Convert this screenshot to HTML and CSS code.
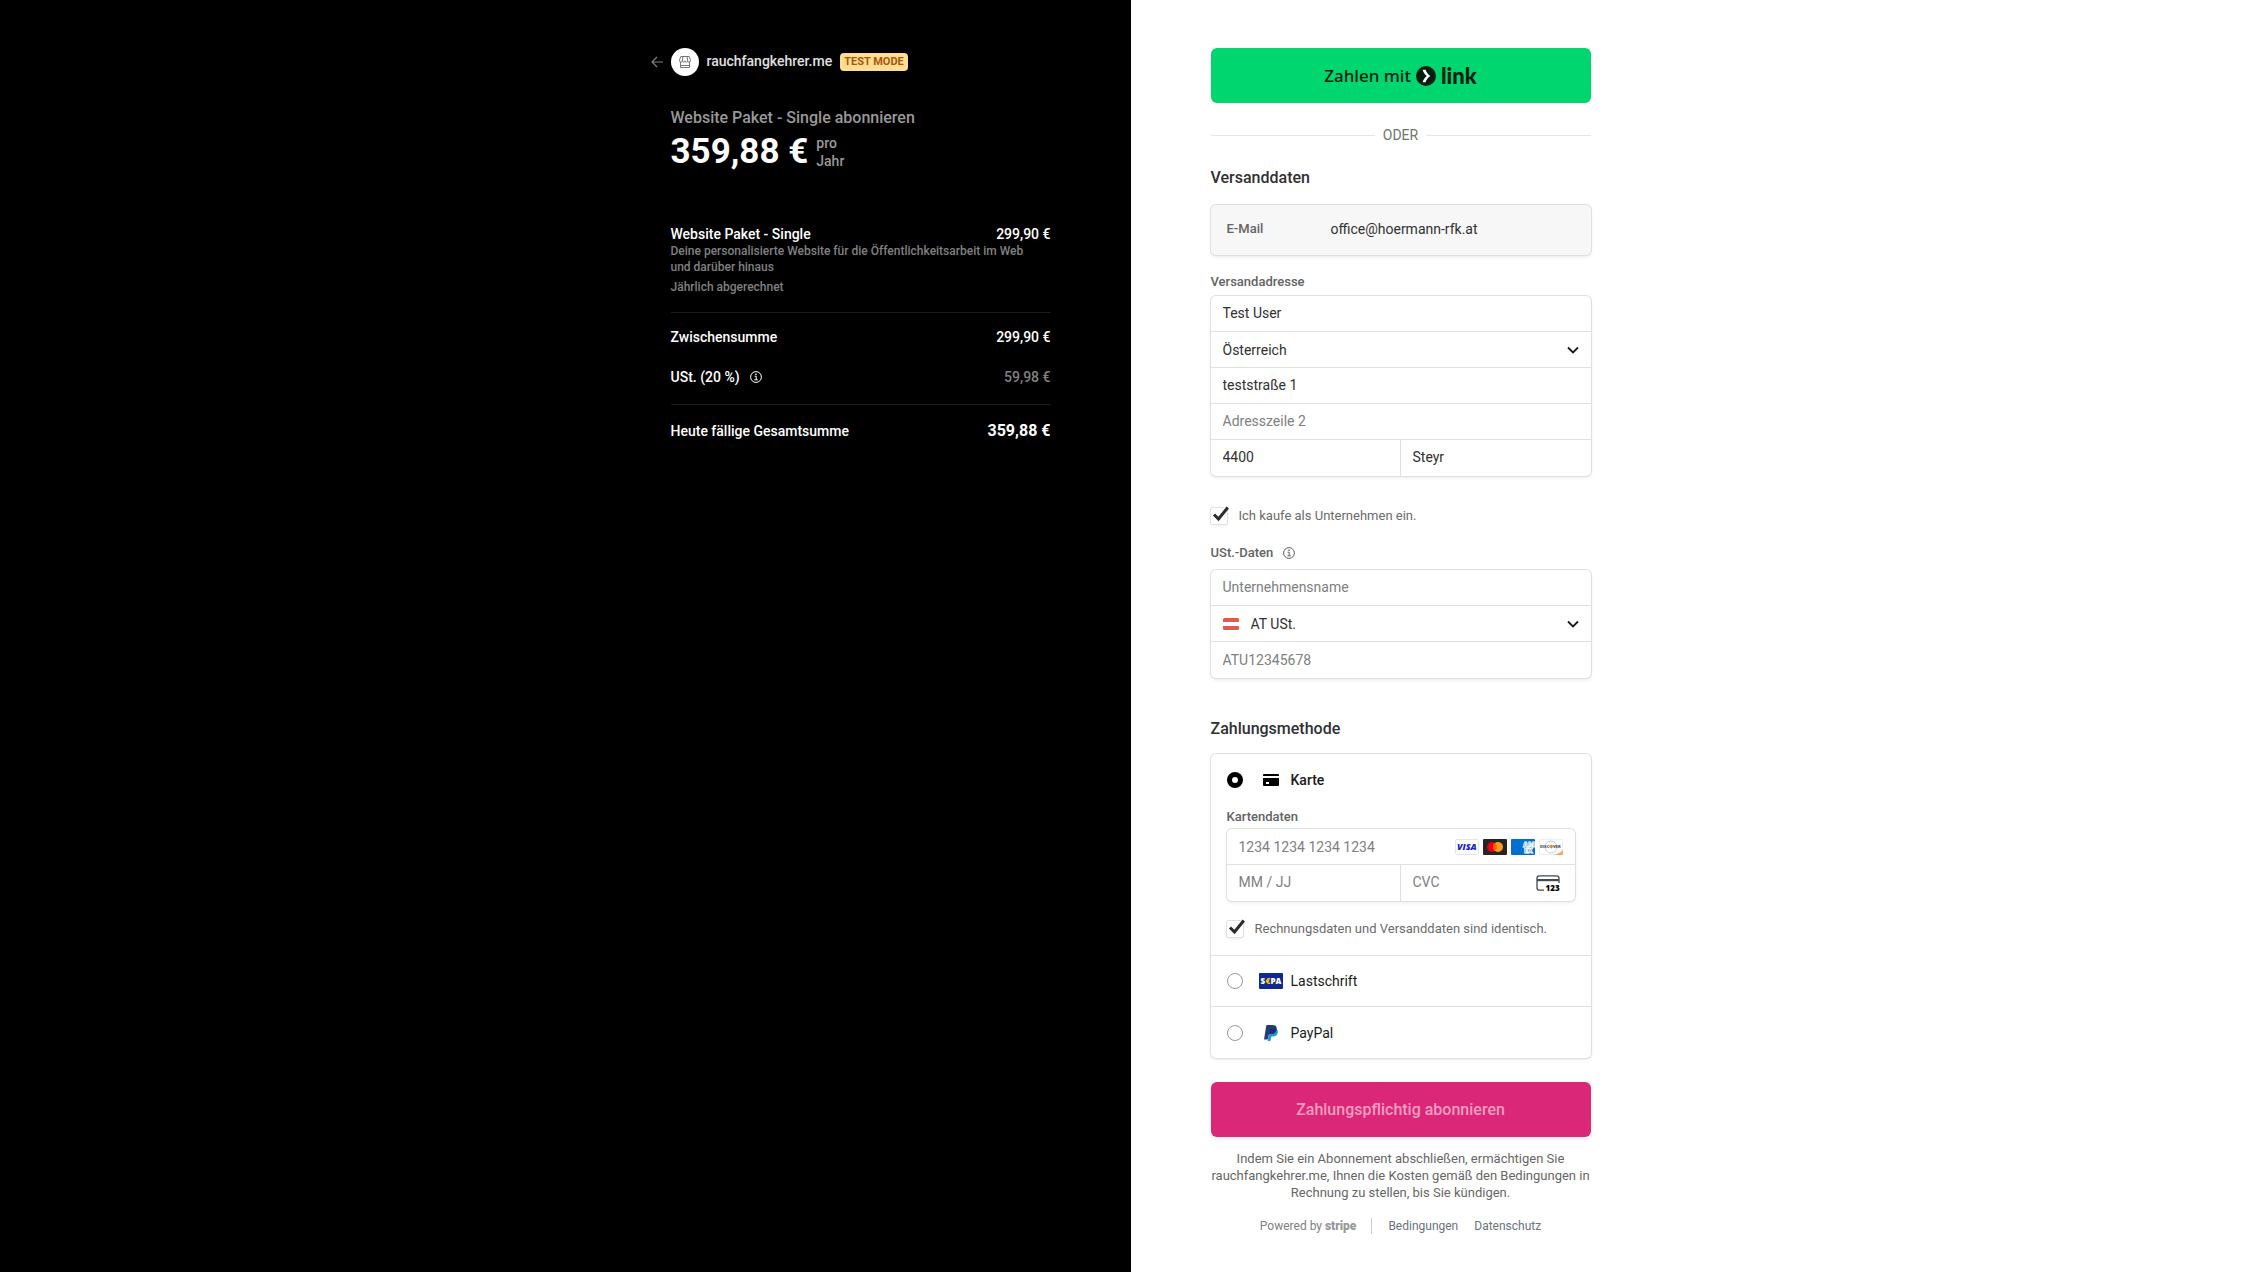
FILE: index.html
```html
<!DOCTYPE html>
<html lang="de">
<head>
<meta charset="utf-8">
<meta name="viewport" content="width=device-width, initial-scale=1">
<title>rauchfangkehrer.me</title>
<link rel="stylesheet" href="styles.css">
</head>
<body>
<div class="checkout">
  <section class="overview">
    <div class="overview-column">
      <header class="merchant">
        <a class="back" href="#" aria-label="Zurück"><svg width="12" height="12" viewBox="0 0 12 12" fill="none" stroke="currentColor" stroke-width="1.2"><path d="M12 6H1M6 1L1 6l5 5"/></svg></a>
        <span class="avatar"><svg width="12" height="12" viewBox="0 0 12 12" fill="none" stroke="#777" stroke-width="1"><path d="M1.800.5h8.400l1.300 3.500v.8c0 1.900-2.800 1.900-2.800 0 0 1.900-2.700 1.900-2.700 0 0 1.900-2.700 1.900-2.700 0 0 1.900-2.800 1.900-2.800 0V4zM4 .5L3.300 5M8 .5L8.700 5M1.500 6v5.500h9V6M1.500 9.500h9"/></svg></span>
        <span class="merchant-name">rauchfangkehrer.me</span>
        <span class="badge">TEST MODE</span>
      </header>
      <h1 class="product-title">Website Paket - Single abonnieren</h1>
      <div class="price"><span class="price-amount">359,88 €</span><span class="price-interval">pro<br>Jahr</span></div>
      <div class="item">
        <div class="line line-item"><span>Website Paket - Single</span><span>299,90 €</span></div>
        <p class="item-note">Deine personalisierte Website für die Öffentlichkeitsarbeit im Web und darüber hinaus</p>
        <p class="item-note item-interval">Jährlich abgerechnet</p>
      </div>
      <div class="line subtotal"><span>Zwischensumme</span><span>299,90 €</span></div>
      <div class="line tax">
        <span class="with-info">USt. (20 %)<svg width="12" height="12" viewBox="0 0 12 12" fill="none" stroke="currentColor"><circle cx="6" cy="6" r="5.400"/><path d="M4.600 5.200H6.200V8.800M4.400 8.800H7.800"/><circle cx="6" cy="3.200" r=".4" fill="currentColor"/></svg></span>
        <span class="muted">59,98 €</span>
      </div>
      <div class="line total"><span>Heute fällige Gesamtsumme</span><span class="total-amount">359,88 €</span></div>
    </div>
  </section>

  <main class="payment">
    <form class="payment-column">
      <button type="button" class="link-button">Zahlen mit
        <svg width="20" height="20" viewBox="0 0 20 20"><circle cx="10" cy="10" r="10" fill="#011e0f"/><path d="M7.100 3.800h3.200c.6 2.500 2.400 4.900 4.600 6.200-2.200 1.400-4 3.700-4.600 6.200H7.100c.8-2.500 2.300-4.700 4.300-6.200-2-1.500-3.500-3.600-4.300-6.200z" fill="#fff" transform="translate(-.6 0)"/></svg>
        <span class="link-word">link</span>
      </button>
      <div class="divider">ODER</div>

      <h2 class="section-title">Versanddaten</h2>
      <div class="panel contact"><span class="label">E-Mail</span><span>office@hoermann-rfk.at</span></div>

      <label class="label group-label" for="name">Versandadresse</label>
      <div class="panel fields">
        <input class="field" id="name" type="text" value="Test User">
        <div class="select-row">
          <select class="field" aria-label="Land"><option>Österreich</option></select>
          <svg class="chevron" width="12" height="12" viewBox="0 0 12 12" fill="none" stroke="#1a1a1a" stroke-width="1.800"><path d="M1 3.500l5 5 5-5"/></svg>
        </div>
        <input class="field" type="text" aria-label="Adresszeile 1" value="teststraße 1">
        <input class="field" type="text" aria-label="Adresszeile 2" placeholder="Adresszeile 2">
        <div class="pair">
          <input class="field" type="text" aria-label="Postleitzahl" value="4400">
          <input class="field" type="text" aria-label="Ort" value="Steyr">
        </div>
      </div>

      <label class="check business"><span class="check-box"><input type="checkbox" checked><svg class="tick" width="18" height="16" viewBox="0 0 18 16" fill="none" stroke="#2b2b2d" stroke-width="3"><path d="M2 8.500l4.500 4.500L15.800 1.500"/></svg></span>Ich kaufe als Unternehmen ein.</label>

      <label class="label group-label with-info tax-label" for="company">USt.-Daten<svg width="12" height="12" viewBox="0 0 12 12" fill="none" stroke="currentColor"><circle cx="6" cy="6" r="5.400"/><path d="M4.600 5.200H6.200V8.800M4.400 8.800H7.800"/><circle cx="6" cy="3.200" r=".4" fill="currentColor"/></svg></label>
      <div class="panel fields">
        <input class="field" id="company" type="text" placeholder="Unternehmensname">
        <div class="select-row">
          <select class="field field-flag" aria-label="Art der Steuernummer"><option>AT USt.</option></select>
          <svg class="flag" width="16" height="12" viewBox="0 0 16 12"><rect width="16" height="12" rx="1.500" fill="#e25950"/><path d="M0 4h16v4H0z" fill="#fff"/></svg>
          <svg class="chevron" width="12" height="12" viewBox="0 0 12 12" fill="none" stroke="#1a1a1a" stroke-width="1.800"><path d="M1 3.500l5 5 5-5"/></svg>
        </div>
        <input class="field" type="text" aria-label="Steuernummer" placeholder="ATU12345678">
      </div>

      <h2 class="section-title method-title">Zahlungsmethode</h2>
      <div class="panel methods">
        <label class="method method-active">
          <input class="radio" type="radio" name="method" checked>
          <span class="method-icon"><svg width="16" height="12" viewBox="0 0 16 12"><path d="M0 1.200C0 .4.500 0 1.200 0h13.600c.7 0 1.200.4 1.200 1.200V2H0zM0 4h16v6.800c0 .8-.5 1.200-1.200 1.200H1.200C.5 12 0 11.600 0 10.800z"/><path d="M3 8h3v2H3z" fill="#fff"/></svg></span>Karte
        </label>
        <div class="card-details">
          <label class="label card-label" for="card-number">Kartendaten</label>
          <div class="panel fields">
            <div class="icon-row">
              <input class="field" id="card-number" type="text" placeholder="1234 1234 1234 1234">
              <div class="brands">
                <svg width="24" height="16" viewBox="0 0 24 16"><rect x=".5" y=".5" width="23" height="15" rx="1" fill="#fff" stroke="#e6e6e6"/><text x="11.800" y="11.300" class="logo-text" font-size="9" font-style="italic" text-anchor="middle" fill="#171ecb">VISA</text></svg>
                <svg width="24" height="16" viewBox="0 0 24 16"><rect width="24" height="16" rx="1" fill="#252525"/><circle cx="9" cy="8" r="5" fill="#eb001b"/><circle cx="15" cy="8" r="5" fill="#f79e1b"/><path d="M12 4a5 5 0 0 1 0 8 5 5 0 0 1 0-8z" fill="#ff5f00"/></svg>
                <svg width="24" height="16" viewBox="0 0 24 16"><rect width="24" height="16" rx="1" fill="#016fd0"/><g class="logo-text" fill="none" stroke="#fff" stroke-width=".8"><text x="12" y="8" font-size="7">AM</text><text x="13" y="14" font-size="7">EX</text></g></svg>
                <svg width="24" height="16" viewBox="0 0 24 16"><rect x=".5" y=".5" width="23" height="15" rx="1" fill="#fff" stroke="#eee"/><path d="M24 11v4a1 1 0 0 1-1 1h-9c4.500-.8 8-2.500 10-5z" fill="#f9a05f"/><circle cx="12" cy="8" r="6" fill="#fff" stroke="#b4d4ea"/><circle cx="12.200" cy="7.600" r="1.800" fill="#ef8532"/><g class="logo-text" fill="#4c5660" font-size="4"><text x="1" y="9.200">DISC</text><text x="14" y="9.200">VER</text></g></svg>
              </div>
            </div>
            <div class="pair">
              <input class="field" type="text" aria-label="Ablaufdatum" placeholder="MM / JJ">
              <div class="icon-row">
                <input class="field" type="text" aria-label="CVC" placeholder="CVC">
                <svg class="cvc" width="26" height="20" viewBox="0 0 26 20"><path d="M9 17.200H4.500A2.500 2.500 0 0 1 2 14.700V5.300A2.500 2.500 0 0 1 4.500 2.800h17A2.500 2.500 0 0 1 24 5.300V10" fill="none" stroke="#424b52" stroke-width="1.300"/><path d="M2 6h22v2.200H2z" fill="#424b52"/><text class="logo-text" x="10.500" y="17.800" font-size="8">123</text></svg>
              </div>
            </div>
          </div>
          <label class="check"><span class="check-box"><input type="checkbox" checked><svg class="tick" width="18" height="16" viewBox="0 0 18 16" fill="none" stroke="#2b2b2d" stroke-width="3"><path d="M2 8.500l4.500 4.500L15.800 1.500"/></svg></span>Rechnungsdaten und Versanddaten sind identisch.</label>
        </div>
        <label class="method">
          <input class="radio" type="radio" name="method">
          <span class="method-icon"><svg width="24" height="16" viewBox="0 0 24 16"><rect width="24" height="16" rx="1" fill="#10298e"/><g class="logo-text" font-size="8" fill="#fff"><text x="1.500" y="11">S</text><text x="6.500" y="11" fill="#ffbe00">€</text><text x="11.500" y="11">PA</text></g></svg></span>Lastschrift
        </label>
        <label class="method">
          <input class="radio" type="radio" name="method">
          <span class="method-icon"><svg width="14" height="16" viewBox="0 0 14 16"><path d="M12.300 4c1.500.9 1.900 2.300 1.400 3.900-.7 2.400-2.400 3.500-4.900 3.500h-.9c-.4 0-.6.200-.7.600l-.6 3.500c0 .3-.3.500-.6.500H3.700l1.200-5.500L6 6z" fill="#179bd7"/><path d="M2.300.6C2.400.2 2.700 0 3.100 0h5.400c3 0 4.600 1.400 4.100 4.200-.5 3.200-2.400 4.700-5.400 4.700H5.700c-.5 0-.7.200-.8.600L4 14.100c-.1.300-.2.400-.5.400H.5c-.3 0-.5-.2-.4-.5z" fill="#253b80"/><path d="M6.300 4.200c.1-.4.300-.6.700-.6h4c.6 0 1.100.1 1.600.4-.4 3.200-2.400 4.900-5.400 4.900H5.500z" fill="#222d65"/></svg></span>PayPal
        </label>
      </div>

      <button type="submit" class="submit">Zahlungspflichtig abonnieren</button>
      <p class="terms">Indem Sie ein Abonnement abschließen, ermächtigen Sie rauchfangkehrer.me, Ihnen die Kosten gemäß den Bedingungen in Rechnung zu stellen, bis Sie kündigen.</p>
      <footer class="footer">
        <span class="powered">Powered by <b class="stripe">stripe</b></span>
        <span class="footer-links"><a href="#">Bedingungen</a><a href="#">Datenschutz</a></span>
      </footer>
    </form>
  </main>
</div>
</body>
</html>
```
FILE: styles.css
```css
* { box-sizing: border-box; }

body {
  margin: 0;
  background: #fff;
  color: #303032;
  font: 14px/20px Roboto, "Liberation Sans", sans-serif;
}

h1, h2, p { margin: 0; }
svg { display: block; flex: none; }
button, input, select { font: inherit; color: inherit; margin: 0; }

.checkout {
  display: grid;
  grid-template-columns: 1fr 1fr;
  min-height: 100vh;
}

.overview {
  display: flex;
  justify-content: flex-end;
  padding: 48px 80px 0 32px;
  background: #000;
  color: #fff;
}
.overview-column, .payment-column { width: 100%; max-width: 380px; }
.payment { padding: 48px 32px 0 80px; }

/* Order summary */
.merchant {
  display: flex;
  align-items: center;
  gap: 8px;
  margin-left: -20px;
}
.back { color: #808080; }
.avatar {
  display: grid;
  place-items: center;
  width: 28px;
  height: 28px;
  border-radius: 50%;
  background: #fff;
}
.merchant-name { padding-bottom: 2px; font-weight: 500; color: #e0e0e0; }
.badge {
  padding: 0 4px;
  border-radius: 4px;
  background: #ffde92;
  color: #a8550e;
  font-size: 11px;
  font-weight: 700;
  line-height: 18px;
}
.product-title {
  margin-top: 32px;
  color: #999;
  font-size: 16px;
  font-weight: 500;
  line-height: 20px;
}
.price { display: flex; align-items: center; gap: 8px; }
.price-amount { font-size: 35px; font-weight: 700; line-height: 48px; }
.price-interval { color: #999; font-weight: 500; line-height: 18px; }

.line {
  display: flex;
  justify-content: space-between;
  font-weight: 500;
}
.item {
  margin-top: 49px;
  padding-bottom: 17px;
  border-bottom: 1px solid #1c1c1c;
}
.line-item { line-height: 18px; }
.item-note {
  max-width: 356px;
  color: #808080;
  font-size: 12px;
  font-weight: 500;
  line-height: 16px;
}
.item-interval { margin-top: 4px; }
.subtotal { margin-top: 14px; }
.tax {
  margin-top: 20px;
  padding-bottom: 17px;
  border-bottom: 1px solid #1c1c1c;
}
.muted { color: #808080; }
.total { margin-top: 16px; }
.total-amount { font-size: 16px; font-weight: 700; }
.with-info { display: flex; align-items: center; gap: 10px; }

/* Payment form */
.link-button, .submit {
  display: flex;
  align-items: center;
  justify-content: center;
  width: 100%;
  height: 55px;
  padding: 0;
  border: 0;
  border-radius: 6px;
}
.link-button {
  gap: 5px;
  background: #00d66f;
  color: #011e0f;
  font: 500 17px/24px "Noto Sans", sans-serif;
}
.link-word { font-family: Lato, sans-serif; font-size: 22px; font-weight: 900; }

.divider {
  display: flex;
  align-items: center;
  gap: 8px;
  margin-top: 22px;
  color: #737373;
}
.divider::before, .divider::after {
  content: "";
  flex: 1;
  height: 1px;
  background: #e6e6e6;
}

.section-title {
  margin-top: 23px;
  color: #303032;
  font-size: 16px;
  font-weight: 500;
  line-height: 20px;
}
.label { color: #636363; font-size: 13px; font-weight: 500; line-height: 16px; }
.group-label { display: block; margin: 19px 0 6px; }

.panel {
  border-radius: 5px;
  background: #fff;
  box-shadow: 0 0 0 1px #e0e0e0, 0 2px 4px 0 rgba(0, 0, 0, .07), 0 1px 2px 0 rgba(0, 0, 0, .05);
}
.contact {
  display: grid;
  grid-template-columns: 104px 1fr;
  align-items: center;
  height: 50px;
  margin-top: 17px;
  padding: 0 16px 2px;
  background: #f7f7f7;
}

.field {
  display: block;
  width: 100%;
  min-width: 0;
  height: 36px;
  padding: 0 12px 1px;
  border: 0;
  border-radius: 5px;
  outline: 0;
  background: transparent;
  appearance: none;
}
.field::placeholder { color: #808080; opacity: 1; }
.field-flag { padding-left: 40px; }

/* Stacked rows share 1px rules inside one outlined panel */
.fields > * { height: 36px; }
.fields > :first-child { height: 35px; }
.fields > :last-child { height: 37px; }
.fields > * + * { border-top: 1px solid #e0e0e0; border-radius: 0; }

.select-row, .icon-row { display: grid; align-items: center; min-width: 0; }
.select-row > *, .icon-row > * { grid-area: 1 / 1; }
.chevron { justify-self: end; margin-right: 12px; pointer-events: none; }
.flag { margin-left: 12px; pointer-events: none; }
.pair { display: grid; grid-template-columns: 1fr 1fr; }
.pair .field { padding-bottom: 2px; }
.pair > :first-child { border-right: 1px solid #e0e0e0; border-radius: 0; }
.brands { display: flex; gap: 4px; justify-self: end; margin-right: 12px; }
.cvc { justify-self: end; margin-right: 14px; }
.logo-text { font-family: "Open Sans", sans-serif; font-weight: 800; }

.check {
  display: flex;
  align-items: center;
  gap: 12px;
  color: #6b6b6b;
  font-size: 13px;
  line-height: 16px;
}
.check-box { display: grid; width: 16px; height: 16px; }
.check-box > * { grid-area: 1 / 1; }
.check-box input {
  width: 16px;
  height: 16px;
  border-radius: 2px;
  background: #fff;
  box-shadow: 0 0 0 1px #e0e0e0, 0 2px 4px 0 rgba(0, 0, 0, .07);
  appearance: none;
}
.tick { margin: -2px 0 0 1px; pointer-events: none; }
.business { margin-top: 32px; }
.group-label.tax-label { display: flex; margin: 21px 0 9px; }

/* Payment methods */
.method-title { margin-top: 41px; }
.methods { margin-top: 15px; }
.method {
  display: flex;
  align-items: center;
  height: 51px;
  padding: 0 16px;
  border-top: 1px solid #e0e0e0;
  color: #1a1a1a;
}
.method:last-child { height: 52px; }
.method-active { border-top: 0; font-weight: 500; }
.card-details { padding: 4px 16px 18px; }
.card-details .check { margin-top: 20px; }
.card-label { display: block; margin-bottom: 4px; }
.radio {
  width: 16px;
  height: 16px;
  border: 1px solid #999;
  border-radius: 50%;
  appearance: none;
}
.radio:checked { border: 5px solid #000; }
.method-icon {
  display: grid;
  place-items: center;
  width: 24px;
  margin: 0 8px 0 16px;
}

.submit {
  margin-top: 24px;
  background: #db2777;
  box-shadow: 0 2px 4px rgba(0, 0, 0, .1);
  color: #f19dc2;
  font-size: 16px;
  font-weight: 500;
}
.terms {
  margin-top: 13px;
  color: #666;
  font-size: 13px;
  line-height: 17px;
  text-align: center;
}
.footer {
  display: flex;
  justify-content: center;
  margin-top: 17px;
  color: #808080;
  font-size: 12px;
  line-height: 16px;
}
.powered { padding-right: 15px; border-right: 1px solid #ccc; }
.stripe { color: #999; font-weight: 900; }
.footer-links { display: flex; gap: 16px; padding-left: 16px; }
.footer-links a { color: #6b7280; text-decoration: none; }
```
